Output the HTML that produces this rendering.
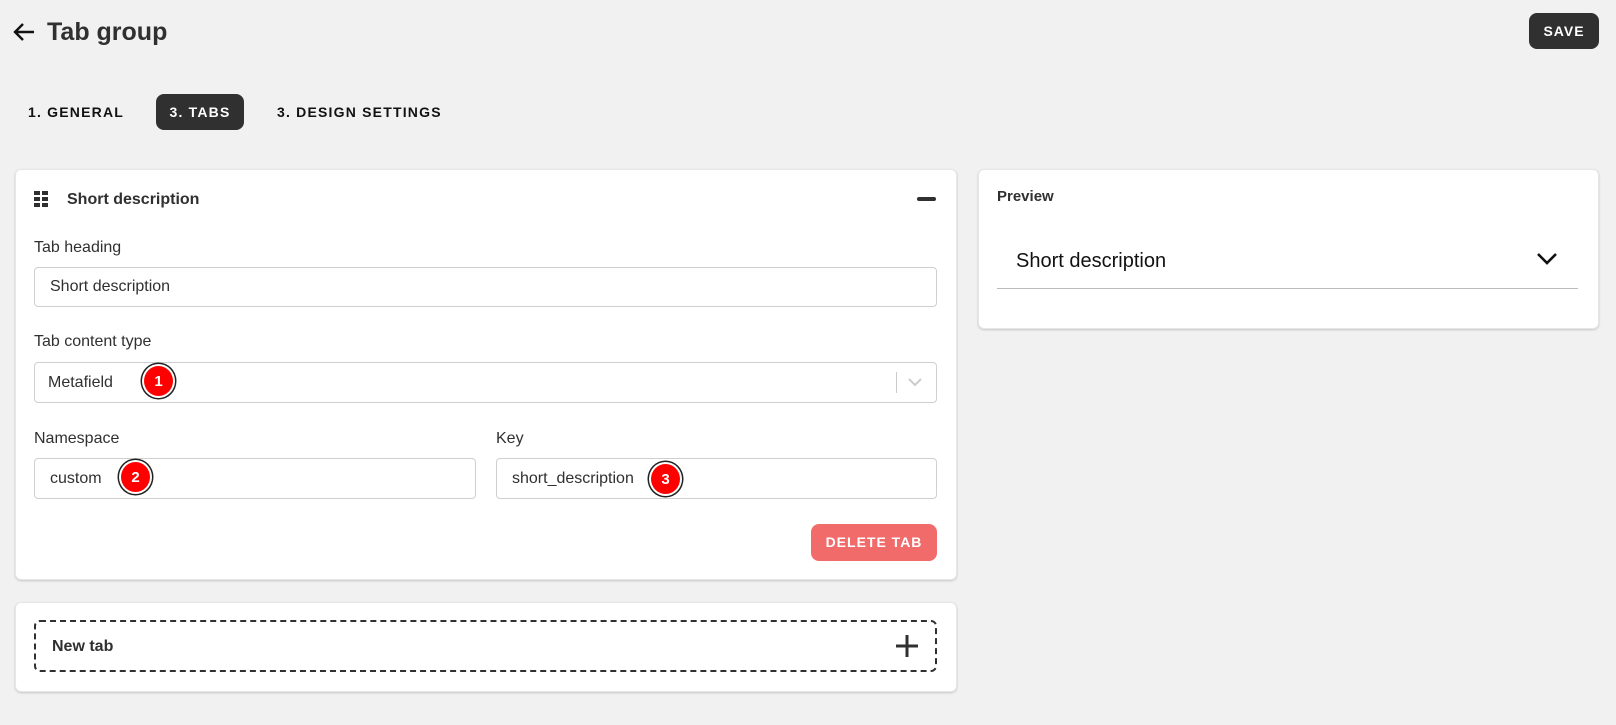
<!DOCTYPE html>
<html><head><meta charset="utf-8"><style>
*{box-sizing:border-box;margin:0;padding:0}
body{width:1616px;height:725px;background:#f1f1f1;font-family:"Liberation Sans",sans-serif;color:#303030;position:relative;overflow:hidden}
.a{position:absolute}
.card{position:absolute;background:#fff;border-radius:6px;box-shadow:0 1px 2px rgba(0,0,0,.18);border:1px solid #e6e6e6}
.lbl{position:absolute;font-size:16px;color:#303030}
.inp{position:absolute;border:1px solid #cfcfcf;border-radius:4px;background:#fff;font-size:16px;display:flex;align-items:center;padding-left:15px;color:#303030}
.tab{position:absolute;font-weight:bold;font-size:14px;letter-spacing:1.2px;top:94px;height:36px;line-height:36px}
.badge{position:absolute;width:33px;height:34px;border-radius:50%;background:#f00;border:2px solid #fff;box-shadow:0 0 0 1.5px #222;color:#fff;font-weight:bold;font-size:15px;text-align:center;line-height:32px}
</style></head><body>
<svg class="a" style="left:12px;top:21px" width="24" height="22" viewBox="0 0 24 22"><path d="M22 11H3M11 3L3 11l8 8" stroke="#111" stroke-width="2.4" fill="none"/></svg>
<div class="a" style="left:47px;top:18px;font-size:25px;font-weight:bold;color:#303030">Tab group</div>
<div class="a" style="left:1529px;top:13px;width:70px;height:36px;background:#303030;border-radius:8px;color:#fff;font-weight:bold;font-size:14px;letter-spacing:1px;text-align:center;line-height:36px">SAVE</div>
<div class="tab" style="left:28px;color:#111">1. GENERAL</div>
<div class="tab" style="left:156px;width:88px;background:#303030;color:#fff;border-radius:8px;text-align:center">3. TABS</div>
<div class="tab" style="left:277px;color:#111">3. DESIGN SETTINGS</div>

<div class="card" style="left:15px;top:169px;width:942px;height:411px"></div>
<svg class="a" style="left:34px;top:191px" width="15" height="16" viewBox="0 0 15 16" fill="#303030"><rect x="0" y="0" width="6" height="4"/><rect x="8" y="0" width="6" height="4"/><rect x="0" y="6" width="6" height="4"/><rect x="8" y="6" width="6" height="4"/><rect x="0" y="12" width="6" height="4"/><rect x="8" y="12" width="6" height="4"/></svg>
<div class="a" style="left:67px;top:191px;font-size:16px;font-weight:bold">Short description</div>
<div class="a" style="left:917px;top:197px;width:19px;height:4px;background:#303030;border-radius:2px"></div>
<div class="lbl" style="left:34px;top:239px">Tab heading</div>
<div class="inp" style="left:34px;top:267px;width:903px;height:40px">Short description</div>
<div class="lbl" style="left:34px;top:333px">Tab content type</div>
<div class="inp" style="left:34px;top:362px;width:903px;height:41px;padding-left:13px">Metafield</div>
<div class="a" style="left:896px;top:372px;width:1px;height:21px;background:#ccc"></div>
<svg class="a" style="left:907px;top:377px" width="16" height="10" viewBox="0 0 16 10"><path d="M2 2l6 6 6-6" stroke="#ccc" stroke-width="2" fill="none"/></svg>
<div class="badge" style="left:142px;top:364px">1</div>
<div class="lbl" style="left:34px;top:430px">Namespace</div>
<div class="lbl" style="left:496px;top:430px">Key</div>
<div class="inp" style="left:34px;top:458px;width:442px;height:41px">custom</div>
<div class="inp" style="left:496px;top:458px;width:441px;height:41px">short_description</div>
<div class="badge" style="left:119px;top:460px">2</div>
<div class="badge" style="left:649px;top:462px">3</div>
<div class="a" style="left:811px;top:524px;width:126px;height:37px;background:#f26b6b;border-radius:8px;color:#fff;font-weight:bold;font-size:14px;letter-spacing:1px;text-align:center;line-height:37px">DELETE TAB</div>

<div class="card" style="left:15px;top:602px;width:942px;height:90px"></div>
<div class="a" style="left:34px;top:620px;width:903px;height:52px;border:2px dashed #303030;border-radius:6px"></div>
<div class="a" style="left:52px;top:638px;font-size:16px;font-weight:bold">New tab</div>
<svg class="a" style="left:896px;top:635px" width="22" height="22" viewBox="0 0 22 22"><path d="M11 0v22M0 11h22" stroke="#303030" stroke-width="3"/></svg>

<div class="card" style="left:978px;top:169px;width:621px;height:160px"></div>
<div class="a" style="left:997px;top:188px;font-size:15px;font-weight:bold">Preview</div>
<div class="a" style="left:1016px;top:250px;font-size:20px;color:#111">Short description</div>
<svg class="a" style="left:1536px;top:252px" width="22" height="14" viewBox="0 0 22 14"><path d="M2 2l9 9 9-9" stroke="#111" stroke-width="2.6" fill="none"/></svg>
<div class="a" style="left:997px;top:288px;width:581px;height:1px;background:#bbb"></div>
</body></html>
